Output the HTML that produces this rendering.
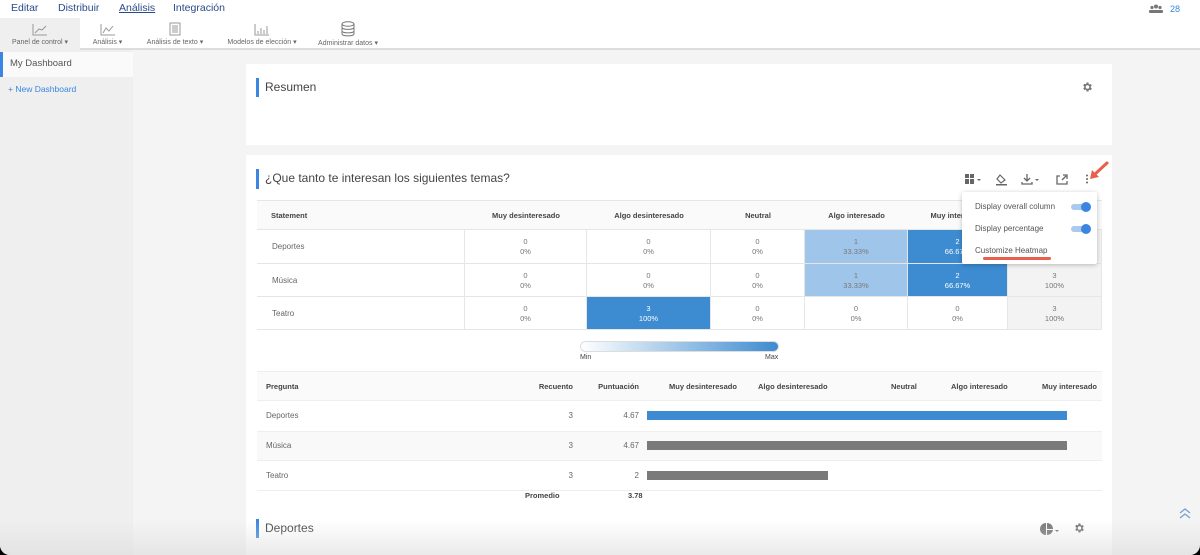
<!DOCTYPE html>
<html><head><meta charset="utf-8"><style>
*{box-sizing:border-box;margin:0;padding:0}
body{width:1200px;height:555px;overflow:hidden;background:#000;font-family:"Liberation Sans",sans-serif;}
#wrap{position:absolute;left:0;top:0;width:1200px;height:555px;background:#f4f4f4;border-radius:0 0 10px 10px;overflow:hidden}
.abs{position:absolute}
.top{left:0;top:0;width:1200px;height:18px;background:#fff}
.top span{position:absolute;top:2px;font-size:10.5px;color:#2a4a8a}
.tb{left:0;top:18px;width:1200px;height:32px;background:#fff;border-bottom:2px solid #ddd}
.tbi{position:absolute;top:0;height:32px;font-size:7px;color:#666;text-align:center}
.side{left:0;top:50px;width:133px;height:505px;background:#efefef}
.card{background:#fff;left:246px;width:866px}
.hd{position:absolute;width:3px;background:#3a86e0}
.t{position:absolute;font-size:8px;color:#666}
.th{position:absolute;font-size:7.5px;font-weight:bold;color:#444}
.cell{position:absolute;font-size:7.5px;color:#777;text-align:center;line-height:10px;border-right:1px solid #e6e6e6;border-bottom:1px solid #e6e6e6}
.b{position:absolute;height:9px}
</style></head><body><div id="wrap">
<div class="abs top">
<span style="left:11px">Editar</span><span style="left:58px">Distribuir</span>
<span style="left:119px;text-decoration:underline">Análisis</span><span style="left:173px">Integración</span>
<svg style="position:absolute;left:1149px;top:4px" width="14" height="9"><circle cx="7" cy="2.5" r="2" fill="#777"/><circle cx="3" cy="3.5" r="1.6" fill="#777"/><circle cx="11" cy="3.5" r="1.6" fill="#777"/><rect x="0" y="6" width="14" height="3" rx="1" fill="#777"/></svg>
<span style="left:1170px;color:#3a86e0;font-size:9px;top:4px">28</span>
</div>
<div class="abs tb">
<div class="tbi" style="left:0;width:80px;background:#efefef"><svg width="16" height="13" style="margin-top:5px"><path d="M1 1V12H15M3 10L7 6L10 7L14 3" stroke="#999" fill="none" stroke-width="1"/></svg><div>Panel de control ▾</div></div>
<div class="tbi" style="left:85px;width:45px"><svg width="16" height="13" style="margin-top:5px"><path d="M1 1V12H15M3 10L6 5L9 8L13 3" stroke="#999" fill="none"/></svg><div>Análisis ▾</div></div>
<div class="tbi" style="left:140px;width:70px"><svg width="12" height="14" style="margin-top:4px"><rect x="1" y="1" width="10" height="12" stroke="#999" fill="none"/><path d="M3 4H9M3 6H9M3 8H9M3 10H9" stroke="#999"/></svg><div>Análisis de texto ▾</div></div>
<div class="tbi" style="left:222px;width:80px"><svg width="16" height="13" style="margin-top:5px"><path d="M1 1V12H15M4 11V8M7 11V5M10 11V7M13 11V3" stroke="#999" fill="none"/></svg><div>Modelos de elección ▾</div></div>
<div class="tbi" style="left:313px;width:70px"><svg width="14" height="16" style="margin-top:3px"><ellipse cx="7" cy="3" rx="6" ry="2.2" stroke="#777" fill="none"/><path d="M1 3V13C1 15.5 13 15.5 13 13V3M1 6.5C1 9 13 9 13 6.5M1 10C1 12.5 13 12.5 13 10" stroke="#777" fill="none"/></svg><div>Administrar datos ▾</div></div>
</div>
<div class="abs side">
<div style="position:absolute;top:2px;left:0;width:133px;height:25px;background:#fafafa;border-left:3px solid #3a86e0;font-size:9.5px;color:#555;padding:6px 0 0 7px">My Dashboard</div>
<div style="position:absolute;top:34px;left:8px;font-size:8.5px;color:#3a86e0">+ New Dashboard</div>
</div>
<div class="abs card" style="top:64px;height:81px">
<div class="hd" style="left:10px;top:14px;height:19px"></div>
<div class="abs" style="left:19px;top:16px;font-size:12px;color:#444">Resumen</div>
<svg class="abs" style="left:835px;top:17px" width="12" height="12" viewBox="0 0 24 24"><path fill="#777" d="M19.4 13a7.5 7.5 0 0 0 0-2l2.1-1.6-2-3.5-2.5 1a7 7 0 0 0-1.7-1L15 3h-4l-.4 2.6a7 7 0 0 0-1.7 1l-2.5-1-2 3.5L6.6 11a7.5 7.5 0 0 0 0 2l-2.1 1.6 2 3.5 2.5-1a7 7 0 0 0 1.7 1L11 21h4l.4-2.6a7 7 0 0 0 1.7-1l2.5 1 2-3.5zM13 15.5a3.5 3.5 0 1 1 0-7 3.5 3.5 0 0 1 0 7z"/></svg>
</div>
<div class="abs card" style="top:155px;height:400px">
<div class="hd" style="left:10px;top:14px;height:20px"></div>
<div class="abs" style="left:19px;top:16px;font-size:12px;color:#444">¿Que tanto te interesan los siguientes temas?</div>
<svg class="abs" style="left:718px;top:18px" width="130" height="14">
<rect x="1" y="1" width="4" height="4" fill="#666"/><rect x="6" y="1" width="4" height="4" fill="#666"/><rect x="1" y="6" width="4" height="5" fill="#666"/><rect x="6" y="6" width="4" height="5" fill="#666"/><path d="M13 6L15 8L17 6Z" fill="#666"/>
<path d="M36 2L41 7L37 10L33 6Z" fill="none" stroke="#666" stroke-width="1.2"/><rect x="32" y="11" width="11" height="1.5" fill="#666"/>
<path d="M63 1V8M60 5L63 8L66 5M58 9V11H68V9" stroke="#666" fill="none" stroke-width="1.3"/><path d="M71 6L73 8L75 6Z" fill="#666"/>
<path d="M96 3H93V11H103V8M98 7L102 3M99 2H103V6" stroke="#666" fill="none" stroke-width="1.3"/>
<circle cx="123" cy="2.5" r="1" fill="#666"/><circle cx="123" cy="6" r="1" fill="#666"/><circle cx="123" cy="9.5" r="1" fill="#666"/>
</svg>
</div>
<!-- heatmap -->
<div class="abs" style="left:257px;top:200px;width:845px;height:30px;background:#fafafa;border-top:1px solid #e6e6e6;border-bottom:1px solid #e6e6e6"></div>
<div class="th" style="left:271px;top:211px">Statement</div>
<div class="th" style="left:465px;width:122px;top:211px;text-align:center">Muy desinteresado</div>
<div class="th" style="left:587px;width:124px;top:211px;text-align:center">Algo desinteresado</div>
<div class="th" style="left:711px;width:94px;top:211px;text-align:center">Neutral</div>
<div class="th" style="left:805px;width:103px;top:211px;text-align:center">Algo interesado</div>
<div class="th" style="left:908px;width:100px;top:211px;text-align:center">Muy interesado</div>
<div class="abs" style="left:257px;top:230px;width:845px;height:100px">
<div class="cell" style="left:0;top:0;width:208px;height:34px"></div><div class="t" style="left:15px;top:12px">Deportes</div>
<div class="cell" style="left:0;top:34px;width:208px;height:33px"></div><div class="t" style="left:15px;top:46px">Música</div>
<div class="cell" style="left:0;top:67px;width:208px;height:33px"></div><div class="t" style="left:15px;top:79px">Teatro</div>
</div>
<div id="hm"></div>
<script>
var cols=[[465,122],[587,124],[711,94],[805,103],[908,100],[1008,94]];
var rows=[[230,34],[264,33],[297,33]];
var d=[[["0","0%"],["0","0%"],["0","0%"],["1","33.33%","#9fc6ea"],["2","66.67%","#3d8bd0"],["3","100%","#f3f3f3"]],
[["0","0%"],["0","0%"],["0","0%"],["1","33.33%","#9fc6ea"],["2","66.67%","#3d8bd0"],["3","100%","#f3f3f3"]],
[["0","0%"],["3","100%","#3d8bd0"],["0","0%"],["0","0%"],["0","0%"],["3","100%","#f3f3f3"]]];
var h="";
for(var r=0;r<3;r++)for(var c=0;c<6;c++){var v=d[r][c];var bg=v[2]||"#fff";var col=bg=="#3d8bd0"?"#fff":"#777";
h+='<div class="cell" style="left:'+cols[c][0]+'px;top:'+rows[r][0]+'px;width:'+cols[c][1]+'px;height:'+rows[r][1]+'px;background:'+bg+';color:'+col+';padding-top:'+(rows[r][1]/2-10)+'px">'+v[0]+'<br>'+v[1]+'</div>';}
document.getElementById("hm").innerHTML=h;
</script>
<div class="abs" style="left:580px;top:341px;width:199px;height:11px;border-radius:6px;border:1px solid #ddd;background:linear-gradient(90deg,#fff,#3d8bd0)"></div>
<div class="th" style="left:580px;top:354px;font-weight:normal;font-size:7px">Min</div>
<div class="th" style="left:765px;top:354px;font-weight:normal;font-size:7px">Max</div>
<!-- second table -->
<div class="abs" style="left:257px;top:371px;width:845px;height:30px;background:#fafafa;border-top:1px solid #eee;border-bottom:1px solid #eee"></div>
<div class="th" style="left:266px;top:382px">Pregunta</div>
<div class="th" style="left:473px;width:100px;top:382px;text-align:right">Recuento</div>
<div class="th" style="left:559px;width:80px;top:382px;text-align:right">Puntuación</div>
<div class="th" style="left:669px;top:382px">Muy desinteresado</div>
<div class="th" style="left:758px;top:382px">Algo desinteresado</div>
<div class="th" style="left:891px;top:382px">Neutral</div>
<div class="th" style="left:951px;top:382px">Algo interesado</div>
<div class="th" style="left:1042px;top:382px">Muy interesado</div>
<div class="abs" style="left:257px;top:431px;width:845px;height:30px;background:#f9f9f9;border-top:1px solid #eee;border-bottom:1px solid #eee"></div>
<div class="abs" style="left:257px;top:490px;width:845px;height:1px;background:#eee"></div>
<div class="t" style="left:266px;top:411px">Deportes</div><div class="t" style="left:473px;width:100px;text-align:right;top:411px">3</div><div class="t" style="left:559px;width:80px;text-align:right;top:411px">4.67</div>
<div class="t" style="left:266px;top:441px">Música</div><div class="t" style="left:473px;width:100px;text-align:right;top:441px">3</div><div class="t" style="left:559px;width:80px;text-align:right;top:441px">4.67</div>
<div class="t" style="left:266px;top:471px">Teatro</div><div class="t" style="left:473px;width:100px;text-align:right;top:471px">3</div><div class="t" style="left:559px;width:80px;text-align:right;top:471px">2</div>
<div class="b" style="left:647px;top:411px;width:420px;background:#3d8bd0"></div>
<div class="b" style="left:647px;top:441px;width:420px;background:#7a7a7a"></div>
<div class="b" style="left:647px;top:471px;width:181px;background:#7a7a7a"></div>
<div class="th" style="left:525px;top:491px">Promedio</div>
<div class="th" style="left:628px;top:491px">3.78</div>
<div class="hd" style="left:256px;top:519px;height:19px"></div>
<div class="abs" style="left:265px;top:521px;font-size:12px;color:#444">Deportes</div>
<svg class="abs" style="left:1040px;top:522px" width="50" height="14">
<path d="M6 1A6 6 0 1 0 6 13Z" fill="#777"/><path d="M7 1A6 6 0 0 1 13 7H7Z" fill="#777"/><path d="M7 8H13A6 6 0 0 1 7 13Z" fill="#777"/><path d="M15 8L17 10L19 8Z" fill="#777"/>
</svg>
<svg class="abs" style="left:1073px;top:522px" width="12" height="12" viewBox="0 0 24 24"><path fill="#777" d="M19.4 13a7.5 7.5 0 0 0 0-2l2.1-1.6-2-3.5-2.5 1a7 7 0 0 0-1.7-1L15 3h-4l-.4 2.6a7 7 0 0 0-1.7 1l-2.5-1-2 3.5L6.6 11a7.5 7.5 0 0 0 0 2l-2.1 1.6 2 3.5 2.5-1a7 7 0 0 0 1.7 1L11 21h4l.4-2.6a7 7 0 0 0 1.7-1l2.5 1 2-3.5zM13 15.5a3.5 3.5 0 1 1 0-7 3.5 3.5 0 0 1 0 7z"/></svg>
<svg class="abs" style="left:1178px;top:507px" width="14" height="12"><path d="M2 6L7 2L12 6M2 11L7 7L12 11" stroke="#7aa3d0" fill="none" stroke-width="1.4"/></svg>
<div class="abs" style="left:0;top:520px;width:1200px;height:35px;background:linear-gradient(rgba(220,220,220,0),rgba(220,220,220,0.6))"></div>
<!-- dropdown -->
<div class="abs" style="left:962px;top:192px;width:135px;height:72px;background:#fff;box-shadow:0 1px 5px rgba(0,0,0,0.25);border-radius:2px">
<div class="t" style="left:13px;top:10px;color:#555">Display overall column</div>
<div class="t" style="left:13px;top:32px;color:#555">Display percentage</div>
<div class="t" style="left:13px;top:54px;color:#555">Customize Heatmap</div>
<div class="abs" style="left:109px;top:12px;width:19px;height:6px;border-radius:3px;background:#a9c9ef"></div><div class="abs" style="left:119px;top:10px;width:10px;height:10px;border-radius:50%;background:#3a86e0"></div>
<div class="abs" style="left:109px;top:34px;width:19px;height:6px;border-radius:3px;background:#a9c9ef"></div><div class="abs" style="left:119px;top:32px;width:10px;height:10px;border-radius:50%;background:#3a86e0"></div>
<div class="abs" style="left:21px;top:65px;width:68px;height:3px;border-radius:2px;background:#e8604c"></div>
</div>
<svg class="abs" style="left:1085px;top:160px" width="30" height="25"><path d="M22 3L9 15" stroke="#e8604c" stroke-width="3" stroke-linecap="round"/><path d="M5 19L7 10L14 17Z" fill="#e8604c"/></svg>
</div></body></html>
